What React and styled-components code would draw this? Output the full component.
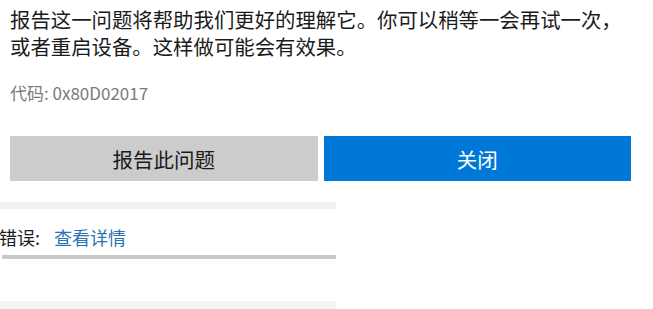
import React from "react";
import styled, { createGlobalStyle } from "styled-components";

const Global = createGlobalStyle`
  html, body { margin: 0; padding: 0; background: #ffffff; }
  body { font-family: "Noto Sans CJK SC", "Noto Sans", sans-serif; }
`;

const Page = styled.div`
  width: 653px;
  height: 309px;
  overflow: hidden;
  display: flex;
  flex-direction: column;
`;

const Content = styled.div`
  padding: 6px 22px 0 10px;
  display: flex;
  flex-direction: column;
`;

const Message = styled.p`
  margin: 0;
  width: 614px;
  font-size: 20.4px;
  line-height: 27px;
  color: #1b1b1b;
`;

const Code = styled.div`
  margin-top: 22px;
  font-size: 17px;
  line-height: 22px;
  color: #7a7a7a;
`;

const Buttons = styled.div`
  margin-top: 32px;
  display: grid;
  grid-template-columns: 1fr 1fr;
  gap: 6px;
`;

const Button = styled.button`
  height: 45px;
  border: none;
  margin: 0;
  padding: 0;
  font-family: inherit;
  font-size: 20.5px;
  color: ${(p) => (p.$primary ? "#ffffff" : "#1b1b1b")};
  background: ${(p) => (p.$primary ? "#0078d7" : "#cccccc")};
`;

const Details = styled.div`
  margin-top: 21px;
  width: 336px;
  display: flex;
  flex-direction: column;
`;

const Band = styled.div`
  height: ${(p) => p.$h}px;
  background: ${(p) => p.$c};
  margin-left: ${(p) => p.$inset || 0}px;
`;

const Row = styled.div`
  height: 46px;
  padding-top: 9px;
  box-sizing: border-box;
  display: flex;
  align-items: center;
  gap: 14px;
  font-size: 18px;
  color: #1b1b1b;
  margin-left: -1px;
`;

const Link = styled.a`
  color: #2a72b5;
  text-decoration: none;
`;

const Spacer = styled.div`
  height: ${(p) => p.$h}px;
`;

export default function App() {
  return (
    <>
      <Global />
      <Page>
        <Content>
          <Message>
            报告这一问题将帮助我们更好的理解它。你可以稍等一会再试一次，或者重启设备。这样做可能会有效果。
          </Message>
          <Code>代码: 0x80D02017</Code>
          <Buttons>
            <Button>报告此问题</Button>
            <Button $primary>关闭</Button>
          </Buttons>
        </Content>
        <Details>
          <Band $h={7} $c="#f1f1f1" />
          <Row>
            <span>错误:</span>
            <Link href="#">查看详情</Link>
          </Row>
          <Band $h={4} $c="#c9c9c9" $inset={2} />
          <Spacer $h={42} />
          <Band $h={10} $c="#f4f4f4" />
        </Details>
      </Page>
    </>
  );
}
